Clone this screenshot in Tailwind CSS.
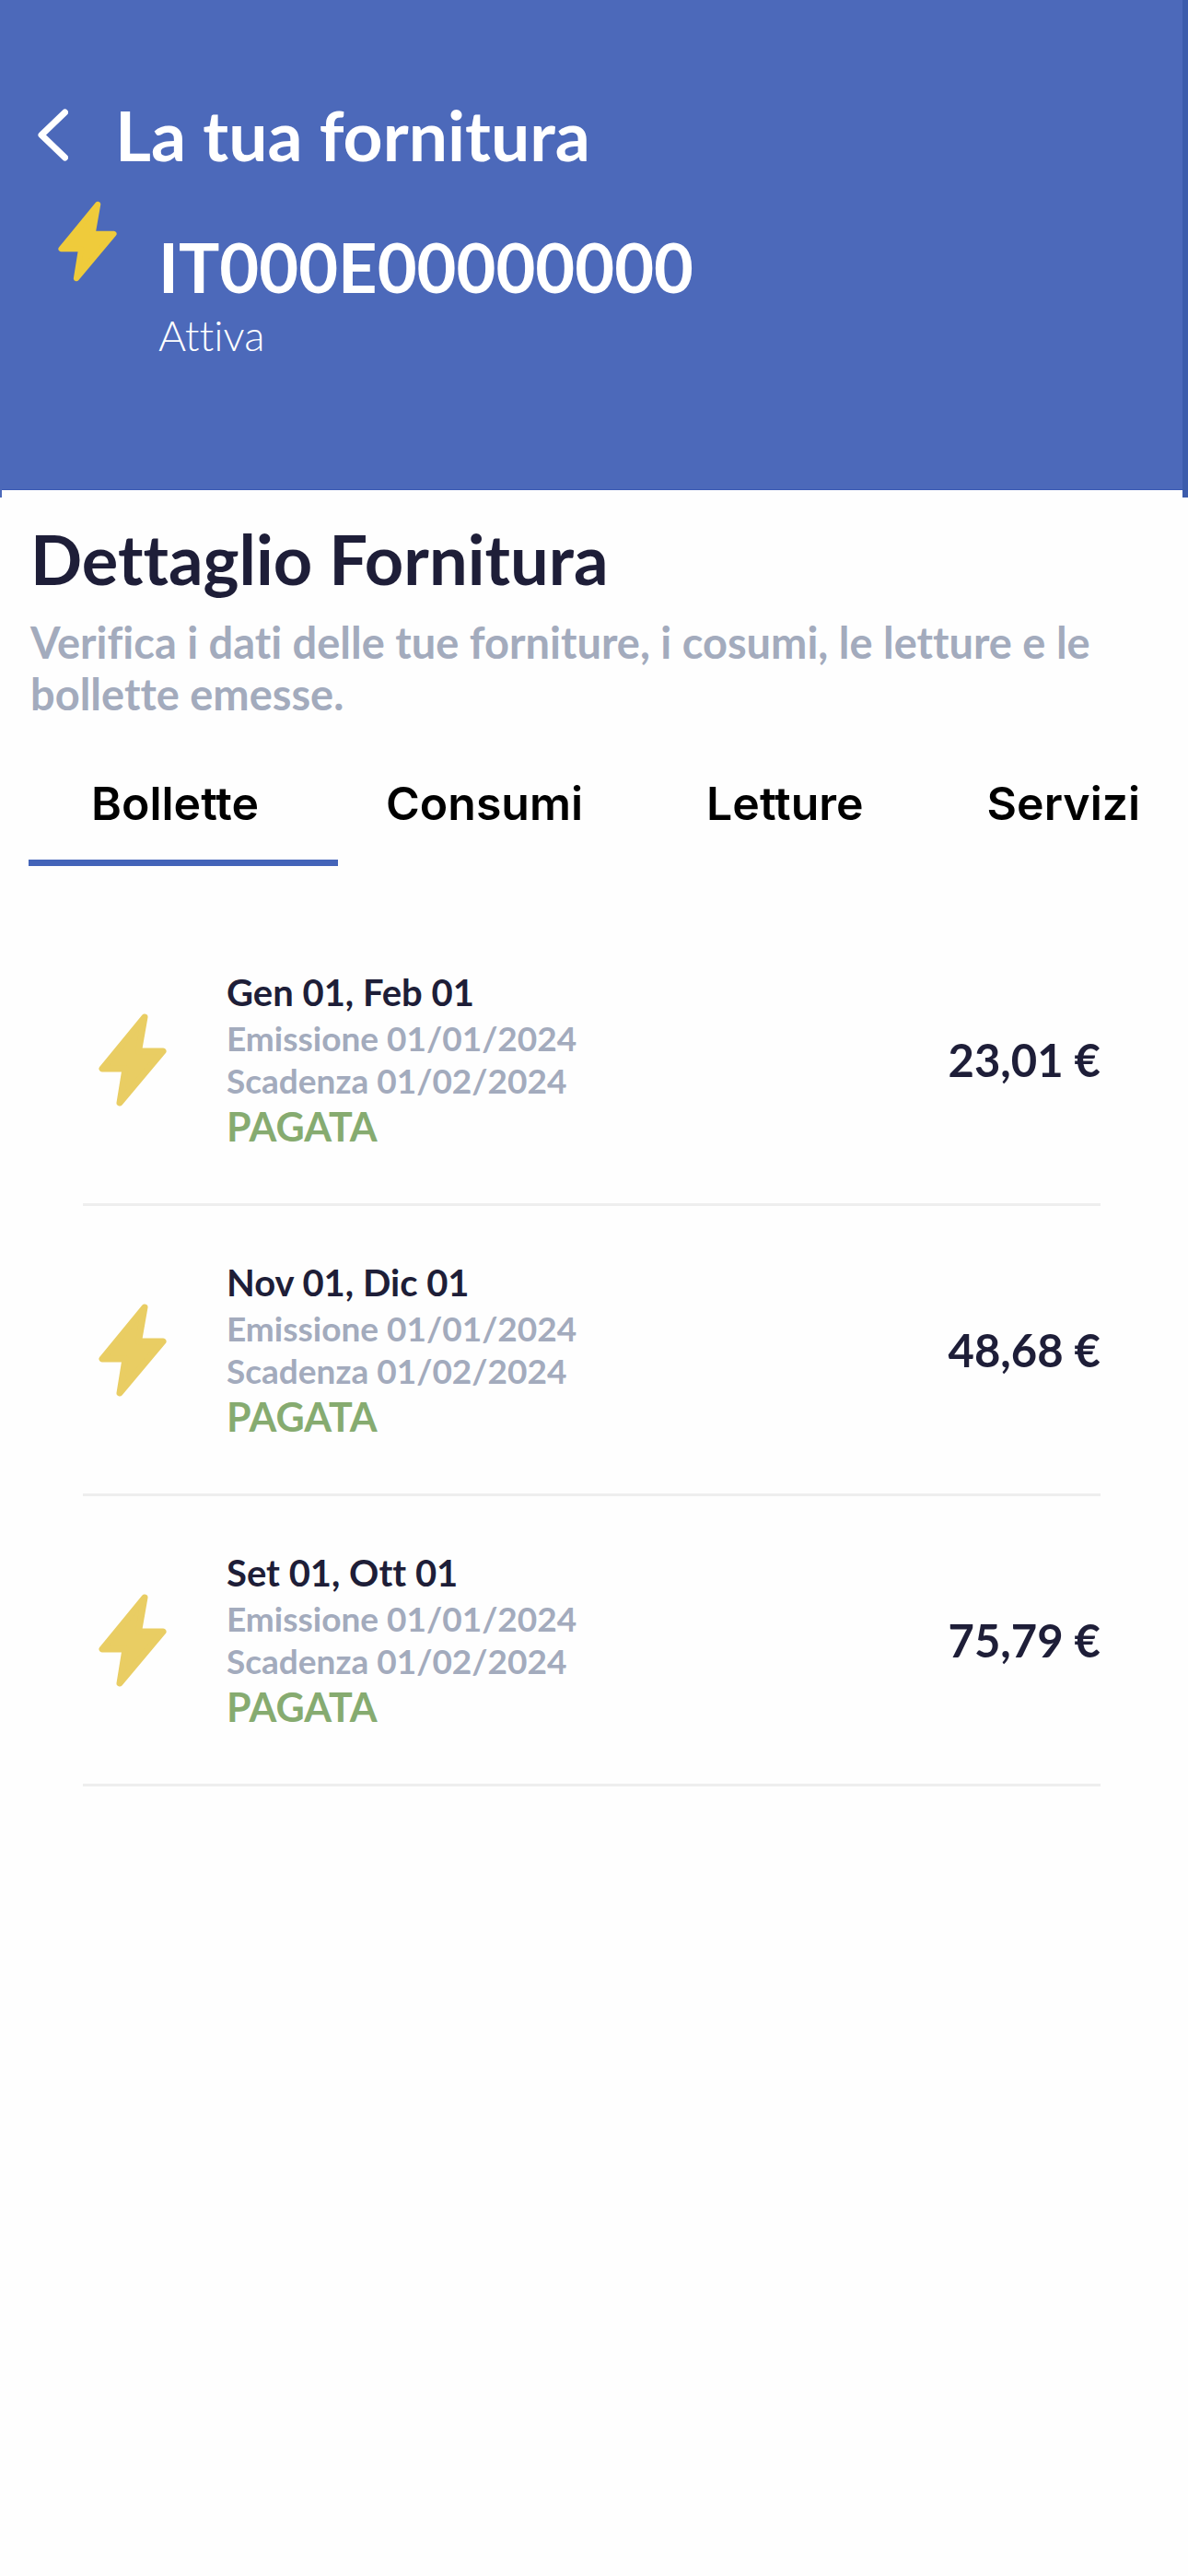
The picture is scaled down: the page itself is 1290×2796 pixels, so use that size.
<!DOCTYPE html>
<html lang="it">
<head>
<meta charset="utf-8">
<meta name="viewport" content="width=device-width, initial-scale=1">
<title>La tua fornitura</title>
<script src="https://cdn.jsdelivr.net/npm/@tailwindcss/browser@4"></script>
</head>
<body class="min-h-screen bg-[#fefefe] font-['Lato',sans-serif] text-[#1e1e38] [font-variant-ligatures:none]">
<svg class="hidden" aria-hidden="true">
  <symbol id="bolt" viewBox="0 0 74 101">
    <path d="M50 4 4 60H29L23 97 70 41H43.500Z" fill="currentColor" stroke="currentColor" stroke-width="7" stroke-linejoin="round"/>
  </symbol>
</svg>

<div class="border-l-2 border-r-6 border-l-[#4c69ba] border-r-[#3c5cac] pb-2">
  <header class="border-b border-[#3a59b4] bg-[#4c69ba] pt-[102px] pb-[137px] text-white">
    <div class="flex items-center pl-[39px]">
      <button type="button" aria-label="Indietro" class="flex h-[88px] w-[84px] items-center">
        <svg class="h-[57px] w-[33px]" viewBox="0 0 33 57" fill="none" stroke="currentColor" stroke-width="7" stroke-linecap="round" stroke-linejoin="round" aria-hidden="true"><path d="M29.500 4 4 28.500 29.500 53"/></svg>
      </button>
      <h1 class="text-[75px] leading-[88px] font-bold">La tua fornitura</h1>
    </div>
    <div class="flex items-start gap-[45px] pt-7 pl-[61px]">
      <svg class="h-[88px] w-[64px] text-[#efcb3b]" aria-hidden="true"><use href="#bolt"/></svg>
      <div class="pt-7">
        <p class="text-[74px] leading-[88px] font-bold">IT000E00000000</p>
        <p class="text-[46px] leading-[60px] font-light">Attiva</p>
      </div>
    </div>
  </header>
</div>

<main>
  <section class="px-[33px] pt-[23px]">
    <h2 class="text-[74px] leading-[88px] font-bold">Dettaglio Fornitura</h2>
    <p class="mt-[18px] text-[47px] leading-[56px] font-bold text-[#a3abbd]">Verifica i dati delle tue forniture, i cosumi, le letture e le bollette emesse.</p>
  </section>

  <div role="tablist" class="mt-[61px] flex overflow-hidden pl-[31px] font-['Inter',sans-serif] text-[50px] leading-[60px] font-semibold text-black">
    <button type="button" role="tab" aria-selected="true" class="w-[336px] border-b-[7px] border-[#4464b9] pb-[31px] pl-[68px] text-left">Bollette</button>
    <button type="button" role="tab" aria-selected="false" class="border-b-[7px] border-transparent pr-[82px] pb-[31px] pl-[52px]">Consumi</button>
    <button type="button" role="tab" aria-selected="false" class="border-b-[7px] border-transparent pr-[82px] pb-[31px] pl-[52px]">Letture</button>
    <button type="button" role="tab" aria-selected="false" class="border-b-[7px] border-transparent pb-[31px] pl-[52px]">Servizi</button>
  </div>

  <ul class="mt-[54px] mr-[95px] ml-[90px]">
    <li class="flex items-center border-b-3 border-[#eeeeee] py-14 pl-[17px]">
      <svg class="h-[101px] w-[74px] text-[#e9cd63]" aria-hidden="true"><use href="#bolt"/></svg>
      <div class="ml-[65px] flex-1">
        <h3 class="text-[40px] leading-[54px] font-bold">Gen 01, Feb 01</h3>
        <p class="text-[37px] leading-[46px] font-bold text-[#a3abbd]">Emissione 01/01/2024</p>
        <p class="text-[37px] leading-[46px] font-bold text-[#a3abbd]">Scadenza 01/02/2024</p>
        <p class="text-[43px] leading-[54px] font-bold text-[#86ab70]">PAGATA</p>
      </div>
      <p class="text-[49px] leading-[60px] font-bold">23,01 €</p>
    </li>
    <li class="flex items-center border-b-3 border-[#eeeeee] py-14 pl-[17px]">
      <svg class="h-[101px] w-[74px] text-[#e9cd63]" aria-hidden="true"><use href="#bolt"/></svg>
      <div class="ml-[65px] flex-1">
        <h3 class="text-[40px] leading-[54px] font-bold">Nov 01, Dic 01</h3>
        <p class="text-[37px] leading-[46px] font-bold text-[#a3abbd]">Emissione 01/01/2024</p>
        <p class="text-[37px] leading-[46px] font-bold text-[#a3abbd]">Scadenza 01/02/2024</p>
        <p class="text-[43px] leading-[54px] font-bold text-[#86ab70]">PAGATA</p>
      </div>
      <p class="text-[49px] leading-[60px] font-bold">48,68 €</p>
    </li>
    <li class="flex items-center border-b-3 border-[#eeeeee] py-14 pl-[17px]">
      <svg class="h-[101px] w-[74px] text-[#e9cd63]" aria-hidden="true"><use href="#bolt"/></svg>
      <div class="ml-[65px] flex-1">
        <h3 class="text-[40px] leading-[54px] font-bold">Set 01, Ott 01</h3>
        <p class="text-[37px] leading-[46px] font-bold text-[#a3abbd]">Emissione 01/01/2024</p>
        <p class="text-[37px] leading-[46px] font-bold text-[#a3abbd]">Scadenza 01/02/2024</p>
        <p class="text-[43px] leading-[54px] font-bold text-[#86ab70]">PAGATA</p>
      </div>
      <p class="text-[49px] leading-[60px] font-bold">75,79 €</p>
    </li>
  </ul>
</main>
</body>
</html>
